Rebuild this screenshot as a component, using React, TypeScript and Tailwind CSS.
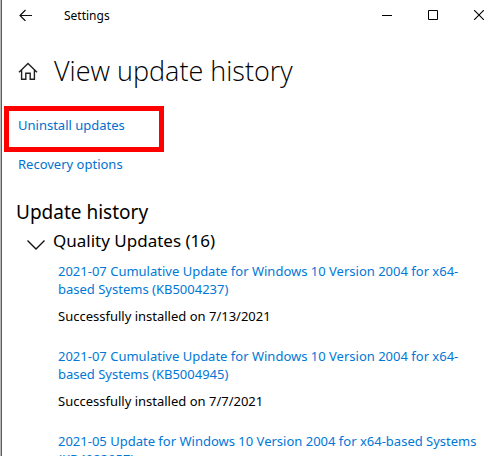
const updates = [
  {
    title: "2021-07 Cumulative Update for Windows 10 Version 2004 for x64-based Systems (KB5004237)",
    status: "Successfully installed on 7/13/2021",
  },
  {
    title: "2021-07 Cumulative Update for Windows 10 Version 2004 for x64-based Systems (KB5004945)",
    status: "Successfully installed on 7/7/2021",
  },
  {
    title: "2021-05 Update for Windows 10 Version 2004 for x64-based Systems (KB4023057)",
    status: "",
  },
];

function TitleBar() {
  return (
    <header className="flex h-[30px] items-center">
      <button aria-label="Back" className="flex w-12 justify-center">
        <svg width="14" height="12" viewBox="0 0 14 12" fill="none" stroke="#111" strokeWidth="1.2">
          <path d="M13 6.5H1M6.5 1L1 6.5 6.5 12" />
        </svg>
      </button>
      <span className="ml-[14px] pt-[2px] text-xs">Settings</span>
      <div className="-mr-px ml-auto flex h-full">
        <button aria-label="Minimize" className="flex w-[46px] items-center justify-center">
          <svg width="10" height="10" viewBox="0 0 10 10" stroke="#000">
            <path d="M0 5.5h10" />
          </svg>
        </button>
        <button aria-label="Maximize" className="flex w-[46px] items-center justify-center">
          <svg width="10" height="10" viewBox="0 0 10 10" fill="none" stroke="#000">
            <path d="M0.5 0.5h9v9h-9z" />
          </svg>
        </button>
        <button aria-label="Close" className="flex w-[46px] items-center justify-center">
          <svg width="10" height="10" viewBox="0 0 10 10" stroke="#000" strokeWidth="1.1">
            <path d="M0 0l10 10M10 0L0 10" />
          </svg>
        </button>
      </div>
    </header>
  );
}

export default function App() {
  return (
    <div className="flex h-screen overflow-hidden bg-white font-['Noto_Sans','Open_Sans',sans-serif] text-[13px] leading-[18px] text-black">
      <div className="w-[2px] shrink-0 border-r border-[#5c5c5c] bg-[#b8b8b8]" />
      <main className="min-w-0 flex-1">
        <TitleBar />
        <div className="mt-[23px] flex items-center gap-4 pl-4">
          <a href="#home" aria-label="Home">
            <svg width="20" height="20" viewBox="0 0 20 20" fill="none" stroke="#222" strokeWidth="1.4">
              <path d="M1 11.2L10 2.4l9 8.8M3.6 9v9.3h4.2v-6h4.4v6h4.2V9" />
            </svg>
          </a>
          <h1 className="font-['Open_Sans',sans-serif] text-[27px] leading-9 font-light">View update history</h1>
        </div>
        <div className="mt-[17px] ml-[2px] h-[46px] w-40 border-5 border-[#ff0000] pt-[5px] pl-[9px] text-[#0071cf]">
          <a href="#uninstall">Uninstall updates</a>
        </div>
        <a href="#recovery" className="mt-[3px] ml-4 block w-fit text-[#0071cf]">
          Recovery options
        </a>
        <h2 className="mt-[25px] ml-[14px] text-[19px] leading-7">Update history</h2>
        <section>
          <button className="ml-6 flex items-center gap-[7px] text-[17px] leading-[30px]">
            <svg width="20" height="20" viewBox="0 0 20 20" fill="none" stroke="#111" strokeWidth="1.4">
              <path d="M1.5 9.5l8.5 8.5 8.5-8.5" />
            </svg>
            Quality Updates (16)
          </button>
          <ul className="mt-[6px] flex flex-col gap-[22px] pr-3 pl-14">
            {updates.map((update) => (
              <li key={update.title}>
                <a href="#update" className="block text-[#0078d7]">
                  {update.title}
                </a>
                {update.status && <p className="mt-[9px]">{update.status}</p>}
              </li>
            ))}
          </ul>
        </section>
      </main>
    </div>
  );
}
